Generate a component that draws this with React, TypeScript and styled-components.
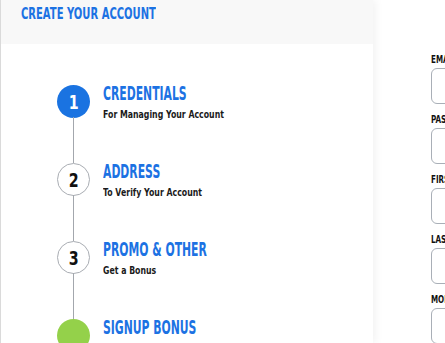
import styled, { createGlobalStyle } from "styled-components";

const GlobalStyle = createGlobalStyle`
  html, body {
    margin: 0;
    padding: 0;
    background: #fff;
    overflow: hidden;
  }
  * {
    box-sizing: border-box;
  }
`;

// no condensed face installed, so squeeze the bold sans horizontally
const Narrow = styled.span<{ $scale: number }>`
  display: inline-block;
  white-space: nowrap;
  transform: scaleX(${(p) => p.$scale});
  transform-origin: left center;
`;

const Page = styled.div`
  display: flex;
  height: 100vh;
  width: 700px;
  border-left: 1px solid #dcdcdc;
  font-family: "DejaVu Sans", "Liberation Sans", sans-serif;
`;

const Sidebar = styled.aside`
  width: 372px;
  flex-shrink: 0;
  background: #fff;
  box-shadow: 3px 0 8px rgba(0, 0, 0, 0.05);
  position: relative;
  z-index: 1;
`;

const SidebarHeader = styled.header`
  height: 44px;
  background: #f8f8f8;
  padding: 4px 20px;
`;

const HeaderTitle = styled.h1`
  margin: 0;
  font-size: 16px;
  line-height: 20px;
  font-weight: 700;
  color: #1c72e3;
`;

const Steps = styled.ol`
  list-style: none;
  margin: 0;
  padding: 41px 0 0 56px;
`;

const Step = styled.li`
  display: flex;
  gap: 13px;
  height: 78px;
  position: relative;
  &:not(:last-child)::after {
    content: "";
    position: absolute;
    left: 16px;
    top: 32px;
    width: 1px;
    height: 46px;
    background: #a3a7ad;
  }
`;

const Circle = styled.div<{ $variant: "active" | "idle" | "bonus" }>`
  width: 33px;
  height: 33px;
  border-radius: 50%;
  flex-shrink: 0;
  display: flex;
  align-items: center;
  justify-content: center;
  font-size: 19px;
  font-weight: 700;
  color: ${(p) => (p.$variant === "active" ? "#fff" : "#111")};
  background: ${(p) =>
    p.$variant === "active" ? "#1a73e1" : p.$variant === "bonus" ? "#94d14a" : "#fff"};
  border: 1px solid
    ${(p) => (p.$variant === "idle" ? "#a9adb3" : "transparent")};
  span {
    transform-origin: center;
  }
`;

const StepText = styled.div`
  display: flex;
  flex-direction: column;
  gap: 4px;
  margin-top: -3px;
`;

const StepTitle = styled.div`
  font-size: 19px;
  font-weight: 700;
  color: #1c72e3;
  line-height: 22px;
`;

const StepSub = styled.div`
  font-size: 11px;
  font-weight: 700;
  color: #1a1a1a;
  line-height: 13px;
`;

const Form = styled.form`
  flex: 1;
  padding: 53px 0 0 58px;
  display: flex;
  flex-direction: column;
  gap: 9px;
`;

const Field = styled.label`
  display: flex;
  flex-direction: column;
  gap: 2px;
`;

const FieldLabel = styled.span`
  font-size: 11px;
  font-weight: 700;
  color: #111;
  text-transform: uppercase;
  line-height: 13px;
`;

const Input = styled.input`
  height: 36px;
  width: 260px;
  border: 1px solid #a9afb7;
  border-radius: 6px;
  background: #fff;
  outline: none;
`;

const steps = [
  { n: "1", title: "CREDENTIALS", sub: "For Managing Your Account", variant: "active" as const },
  { n: "2", title: "ADDRESS", sub: "To Verify Your Account", variant: "idle" as const },
  { n: "3", title: "PROMO & OTHER", sub: "Get a Bonus", variant: "idle" as const },
  { n: "", title: "SIGNUP BONUS", sub: "", variant: "bonus" as const },
];

const fields = ["Email", "Password", "First Name", "Last Name", "Mobile"];

export default function App() {
  return (
    <>
      <GlobalStyle />
      <Page>
        <Sidebar>
          <SidebarHeader>
            <HeaderTitle>
              <Narrow $scale={0.625}>CREATE YOUR ACCOUNT</Narrow>
            </HeaderTitle>
          </SidebarHeader>
          <Steps>
            {steps.map((s) => (
              <Step key={s.title}>
                <Circle $variant={s.variant}>
                  {s.n && <Narrow $scale={0.75}>{s.n}</Narrow>}
                </Circle>
                <StepText>
                  <StepTitle>
                    <Narrow $scale={0.57}>{s.title}</Narrow>
                  </StepTitle>
                  {s.sub && (
                    <StepSub>
                      <Narrow $scale={0.71}>{s.sub}</Narrow>
                    </StepSub>
                  )}
                </StepText>
              </Step>
            ))}
          </Steps>
        </Sidebar>
        <Form>
          {fields.map((f) => (
            <Field key={f}>
              <FieldLabel>
                <Narrow $scale={0.65}>{f}</Narrow>
              </FieldLabel>
              <Input type={f === "Password" ? "password" : "text"} />
            </Field>
          ))}
        </Form>
      </Page>
    </>
  );
}
